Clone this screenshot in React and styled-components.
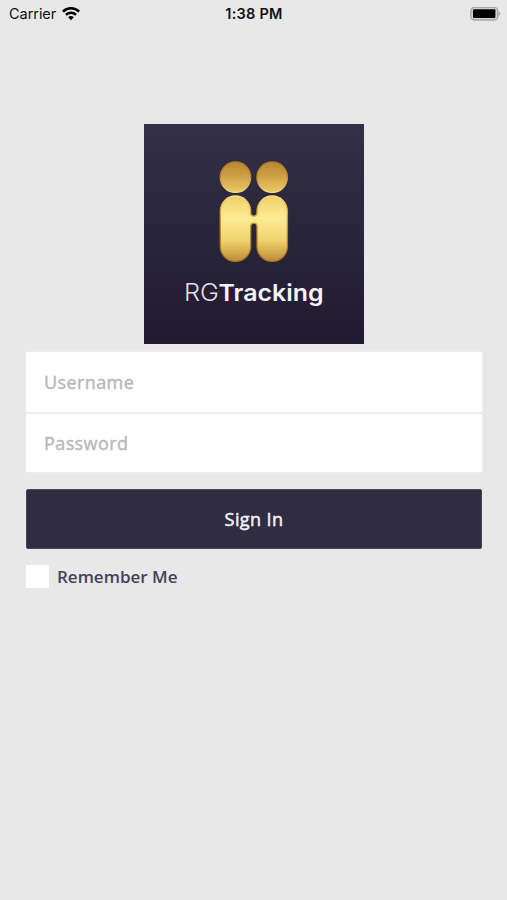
import React, { useState } from 'react';
import styled, { createGlobalStyle } from 'styled-components';

const GlobalStyle = createGlobalStyle`
  * {
    box-sizing: border-box;
  }

  body {
    margin: 0;
    background: #e8e8e8;
    font-family: 'Open Sans', sans-serif;
  }
`;

const Screen = styled.div`
  display: flex;
  flex-direction: column;
  width: 100%;
  min-height: 100vh;
  background: #e8e8e8;
`;

const StatusBar = styled.header`
  display: grid;
  grid-template-columns: 1fr auto 1fr;
  align-items: center;
  height: 27px;
  padding: 0 6px 0 9px;
  color: #111;
  font-family: Inter, sans-serif;
  font-size: 14.5px;
  line-height: 27px;
`;

const Carrier = styled.div`
  display: flex;
  align-items: center;
  gap: 6px;
  letter-spacing: -0.05px;
`;

const Clock = styled.div`
  margin-right: 2px;
  font-weight: 600;
  letter-spacing: 0.25px;
`;

const BatteryIcon = styled.svg`
  justify-self: end;
`;

const Form = styled.form`
  display: flex;
  flex-direction: column;
  padding: 97px 25px 0 26px;
`;

const LogoSvg = styled.svg`
  display: block;
  align-self: center;
  margin-bottom: 7px;
`;

const Fields = styled.div`
  display: flex;
  flex-direction: column;
  gap: 2px;
  border: 1px solid #ececec;
  margin: 0 -1px;
  background: #eeeeee;
  border-radius: 2px;
`;

const Input = styled.input`
  width: 100%;
  height: ${({ $height }) => $height}px;
  padding: 0 18px 1px;
  border: none;
  border-radius: 1px;
  outline: none;
  background: #fff;
  color: #302c41;
  font: 400 18px 'Open Sans', sans-serif;
  letter-spacing: 0.4px;

  &::placeholder {
    color: #b6b7bb;
    opacity: 1;
    -webkit-text-stroke: 0.4px #b6b7bb;
  }
`;

const Button = styled.button`
  height: 60px;
  margin-top: 16px;
  padding: 0 0 1px;
  border: 1px solid #4a465d;
  border-radius: 2px;
  background: #302c41;
  color: #f3f2f8;
  font: 400 18px 'Open Sans', sans-serif;
  letter-spacing: 0.4px;
  -webkit-text-stroke: 0.5px #f3f2f8;
  cursor: pointer;
`;

const Remember = styled.label`
  display: flex;
  align-items: center;
  align-self: flex-start;
  gap: 8px;
  margin-top: 16px;
  height: 23px;
  color: #45415a;
  font-size: 17px;
  font-weight: 600;
  cursor: pointer;
`;

const Checkbox = styled.input`
  appearance: none;
  width: 23px;
  height: 23px;
  margin: 0;
  border-radius: 1px;
  background: #fff;

  &:checked {
    border: 6px solid #fff;
    background: #302c41;
  }
`;

const Wifi = () => (
  <svg width="18" height="14" viewBox="0 0 18 14" fill="none" stroke="#000">
    <path d="M0.9 4.6A11.6 11.6 0 0 1 17.1 4.6" strokeWidth="2.6" />
    <path d="M3.9 7.8A7.3 7.3 0 0 1 14.1 7.8" strokeWidth="2.4" />
    <path d="M9 13.2L6.2 10.3A3.9 3.9 0 0 1 11.8 10.3Z" fill="#000" stroke="none" />
  </svg>
);

const Battery = () => (
  <BatteryIcon width="31" height="14" viewBox="0 0 31 14">
    <rect x="0.8" y="0.4" width="27" height="12.6" rx="3.6" fill="#d0d0d0" stroke="#a8a8a8" strokeWidth="1.4" />
    <rect x="3" y="2.3" width="22.4" height="8.8" rx="1" fill="#000" />
    <path d="M28.7 4.5C30.4 5 30.4 8.4 28.7 8.9Z" fill="#999" />
  </BatteryIcon>
);

const Logo = () => (
  <LogoSvg width="220" height="220" viewBox="0 0 220 220">
    <defs>
      <linearGradient id="night" x1="0" y1="0" x2="0" y2="1">
        <stop offset="0" stopColor="#333047" />
        <stop offset="0.5" stopColor="#29253b" />
        <stop offset="1" stopColor="#201a2e" />
      </linearGradient>
      <linearGradient id="head" x1="0" y1="0" x2="0" y2="1">
        <stop offset="0" stopColor="#ba8838" />
        <stop offset="0.35" stopColor="#c79840" />
        <stop offset="1" stopColor="#ecca66" />
      </linearGradient>
      <linearGradient id="headRim" x1="0" y1="0" x2="0" y2="1">
        <stop offset="0" stopColor="#b37b25" />
        <stop offset="0.5" stopColor="#bd882c" />
        <stop offset="1" stopColor="#f6df7e" />
      </linearGradient>
      <linearGradient id="body" x1="0" y1="0" x2="0" y2="1">
        <stop offset="0" stopColor="#efce68" />
        <stop offset="0.34" stopColor="#fdec94" />
        <stop offset="0.68" stopColor="#f0d36d" />
        <stop offset="1" stopColor="#bd8b36" />
      </linearGradient>
      <linearGradient id="bodyRim" x1="0" y1="0" x2="0" y2="1">
        <stop offset="0" stopColor="#fae581" />
        <stop offset="0.18" stopColor="#d5a544" />
        <stop offset="0.6" stopColor="#b98428" />
        <stop offset="1" stopColor="#a87422" />
      </linearGradient>
    </defs>
    <rect width="220" height="220" fill="url(#night)" />
    <g fill="url(#head)" stroke="url(#headRim)" strokeWidth="1.4">
      <circle cx="91.5" cy="53.2" r="15.2" />
      <circle cx="128.2" cy="53.2" r="15.2" />
    </g>
    <path
      d="M76.3 87.2A15.2 15.2 0 0 1 106.7 87.2V89.4A3.2 3.2 0 0 0 113 89.4V87.2A15.2 15.2 0 0 1 143.4 87.2V122.2A15.2 15.2 0 0 1 113 122.2V101.8A3.2 3.2 0 0 0 106.7 101.8V122.2A15.2 15.2 0 0 1 76.3 122.2Z"
      fill="url(#body)"
      stroke="url(#bodyRim)"
      strokeWidth="1.3"
    />
    <g fontFamily="Inter, sans-serif" fontSize="23.5">
      <text x="40" y="176.5" fontWeight="300" fill="#e2def0" textLength="35" lengthAdjust="spacingAndGlyphs">RG</text>
      <text x="74.5" y="176.5" fontWeight="600" fill="#f5f3ff" textLength="105" lengthAdjust="spacingAndGlyphs">Tracking</text>
    </g>
  </LogoSvg>
);

const App = () => {
  const [remember, setRemember] = useState(false);

  return (
    <Screen>
      <GlobalStyle />
      <StatusBar>
        <Carrier>
          Carrier
          <Wifi />
        </Carrier>
        <Clock>1:38 PM</Clock>
        <Battery />
      </StatusBar>
      <Form onSubmit={e => e.preventDefault()}>
        <Logo />
        <Fields>
          <Input $height={60} type="text" placeholder="Username" />
          <Input $height={58} type="password" placeholder="Password" />
        </Fields>
        <Button type="submit">Sign In</Button>
        <Remember>
          <Checkbox
            type="checkbox"
            checked={remember}
            onChange={e => setRemember(e.target.checked)}
          />
          Remember Me
        </Remember>
      </Form>
    </Screen>
  );
};

export default App;
